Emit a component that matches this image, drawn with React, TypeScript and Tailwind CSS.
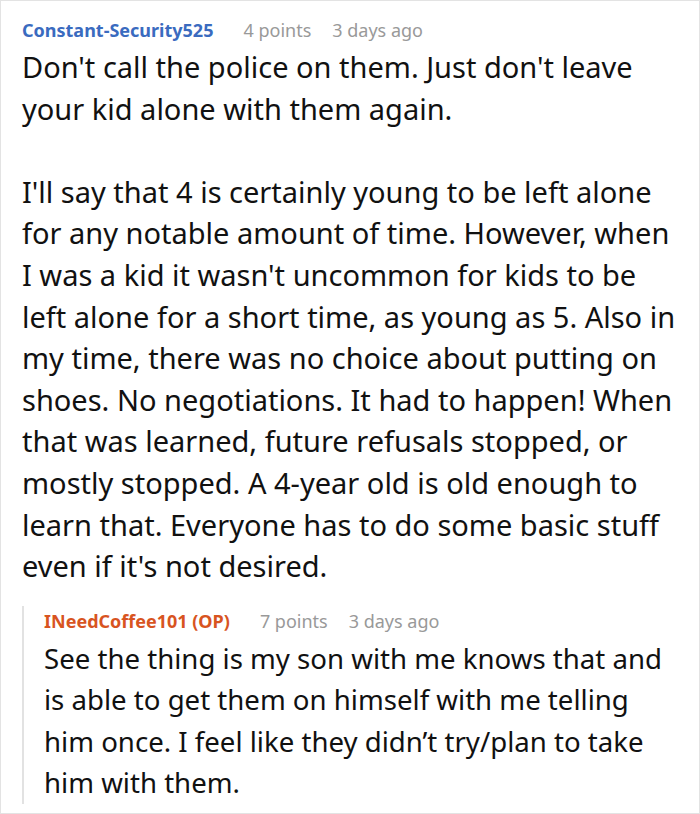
import React from 'react';

const Meta: React.FC<{ name: string; color: string; points: string; ago: string }> = ({ name, color, points, ago }) => (
  <div className="flex items-baseline h-[30px] text-[18px] leading-[30px]">
    <span className={`font-bold ${color}`}>{name}</span>
    <span className="ml-[30px] text-[#999999]">{points}</span>
    <span className="ml-[21px] text-[#999999]">{ago}</span>
  </div>
);

export default function App() {
  return (
    <div className="w-[700px] h-[814px] bg-white border border-[#e3e3e3] overflow-hidden font-['Noto_Sans',sans-serif] text-[#111111]">
      <div className="pl-[21px] pr-[16px] pt-[14px]">
        <Meta name="Constant-Security525" color="text-[#3a6bbf]" points="4 points" ago="3 days ago" />
        <div className="text-[29px] leading-[41.6px] mt-[1px]">
          <p>Don't call the police on them. Just don't leave your kid alone with them again.</p>
          <p className="mt-[41.6px]">
            I'll say that 4 is certainly young to be left alone for any notable amount of time. However, when I was a kid it wasn't uncommon for kids to be left alone for a short time, as young as 5. Also in my time, there was no choice about putting on shoes. No negotiations. It had to happen! When that was learned, future refusals stopped, or mostly stopped. A 4-year old is old enough to learn that. Everyone has to do some basic stuff even if it's not desired.
          </p>
        </div>
        <div className="mt-[19px] border-l-2 border-[#e2e2e2] pl-[20px]">
          <Meta name="INeedCoffee101 (OP)" color="text-[#d8541f]" points="7 points" ago="3 days ago" />
          <p className="text-[27.6px] leading-[41.5px] mt-[2px] -mb-[6px]">
            See the thing is my son with me knows that and is able to get them on himself with me telling him once. I feel like they didn’t try/plan to take him with them.
          </p>
        </div>
      </div>
    </div>
  );
}
